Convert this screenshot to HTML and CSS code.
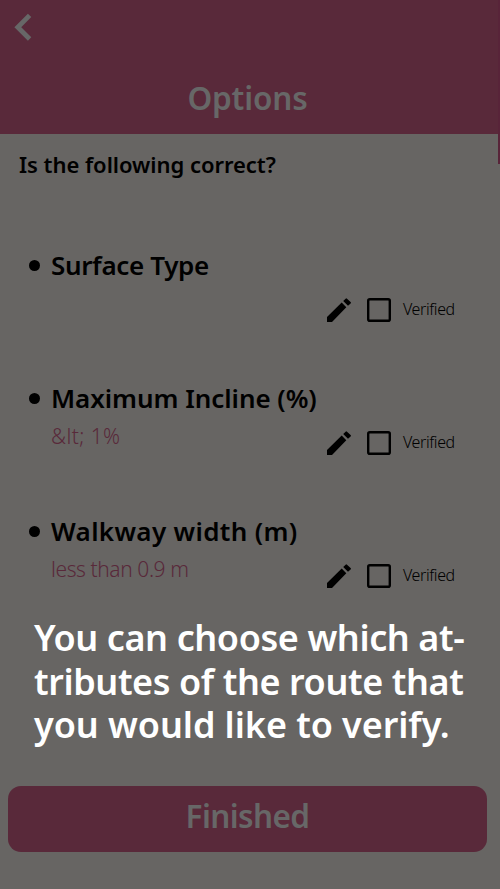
FILE: index.html
```html
<!DOCTYPE html>
<html lang="en"><head><meta charset="utf-8"><title>Options</title><link rel="stylesheet" href="styles.css"></head>
<body>
<main class="screen">
  <header class="header">
    <svg class="back" viewBox="0 0 20 28"><path d="M16.6 2.4 4.8 14.2 16.6 26"/></svg>
    <h1 class="title">Options</h1>
  </header>
  <h2 class="question">Is the following correct?</h2>
  <ul class="list">
    <li class="item">
      <h3 class="name surface">Surface Type</h3>
      <div class="row"><span class="value"></span>
        <svg class="pencil" viewBox="0 0 24 24"><path d="M0 19 14.7 4.6 19.3 9.2 5 24H0zM16.2 3.1 18.6.7Q19.3 0 20 .7L23.6 4.1Q24.3 4.8 23.6 5.5L21 7.8z"/></svg>
        <svg class="box" viewBox="0 0 24 24"><rect x="1.2" y="1.2" width="21.6" height="21.6" rx="1.6"/></svg><span class="verified">Verified</span></div>
    </li>
    <li class="item">
      <h3 class="name incline">Maximum Incline (%)</h3>
      <div class="row"><span class="value percent">&amp;lt; 1%</span>
        <svg class="pencil" viewBox="0 0 24 24"><path d="M0 19 14.7 4.6 19.3 9.2 5 24H0zM16.2 3.1 18.6.7Q19.3 0 20 .7L23.6 4.1Q24.3 4.8 23.6 5.5L21 7.8z"/></svg>
        <svg class="box" viewBox="0 0 24 24"><rect x="1.2" y="1.2" width="21.6" height="21.6" rx="1.6"/></svg><span class="verified">Verified</span></div>
    </li>
    <li class="item">
      <h3 class="name walkway">Walkway width (m)</h3>
      <div class="row"><span class="value metres">less than 0.9 m</span>
        <svg class="pencil" viewBox="0 0 24 24"><path d="M0 19 14.7 4.6 19.3 9.2 5 24H0zM16.2 3.1 18.6.7Q19.3 0 20 .7L23.6 4.1Q24.3 4.8 23.6 5.5L21 7.8z"/></svg>
        <svg class="box" viewBox="0 0 24 24"><rect x="1.2" y="1.2" width="21.6" height="21.6" rx="1.6"/></svg><span class="verified">Verified</span></div>
    </li>
  </ul>
  <button class="finished">Finished</button>
  <div class="scrollbar"></div>
  <p class="hint"><span class="line">You can choose which at-</span><span class="line">tributes of the route that</span><span class="line last">you would like to verify.</span></p>
</main>
</body></html>
```
FILE: styles.css
```css
* { box-sizing: border-box; margin: 0; padding: 0; }
body { background: #676563; font-family: "Noto Sans", "Open Sans", sans-serif; }
.screen { position: relative; display: flex; flex-direction: column; width: 500px; height: 889px; overflow: hidden; color: #000; }
.header { height: 134px; background: #59293a; color: #676767; padding: 13px 0 0 13px; }
.back { display: block; width: 20px; height: 28px; fill: none; stroke: currentColor; stroke-width: 4.8; }
.title { margin: 35px 0 0 -18px; text-align: center; font-size: 31.5px; line-height: 44px; font-weight: 600; letter-spacing: -0.15px; }
.question { margin: 15px 0 0 19px; font-size: 22px; line-height: 30px; font-weight: 600; letter-spacing: -0.04px; white-space: nowrap; }
.list { list-style: none; margin-top: 66px; padding-left: 51px; }
.item { height: 133.2px; }
.name { display: flex; align-items: center; height: 40px; margin-left: -22px; font-size: 26px; font-weight: 600; white-space: nowrap; }
.name::before { content: ""; width: 11px; height: 11px; border-radius: 50%; background: #000; margin-right: 11px; }
.surface { letter-spacing: -0.35px; }
.incline { letter-spacing: -0.05px; }
.walkway { letter-spacing: 0.33px; }
.row { display: flex; height: 50px; padding-top: 13px; }
.value { width: 276px; margin-top: -10px; font-size: 21px; line-height: 30px; font-weight: 300; color: #59293a; white-space: nowrap; }
.percent { letter-spacing: 0.4px; }
.metres { letter-spacing: -0.42px; }
.pencil { width: 24px; height: 24px; margin-right: 16px; fill: #000; }
.box { width: 24px; height: 24px; fill: none; stroke: #000; stroke-width: 2.4; }
.verified { margin-left: 12px; font-size: 16px; line-height: 22px; font-weight: 300; letter-spacing: -0.4px; }
.finished { margin: 141.4px 13px 0 8px; padding-bottom: 7px; height: 66.5px; flex: none; border: 0; border-radius: 13px; background: #59293a; color: #676767; font: 600 31.5px/44px "Noto Sans", sans-serif; letter-spacing: -0.6px; }
.scrollbar { position: absolute; right: 0; top: 0; width: 2.5px; height: 164px; background: #582439; }
.hint { position: absolute; left: 34px; top: 616px; color: #fff; font-size: 36px; line-height: 43.5px; font-weight: 600; white-space: nowrap; }
.line { display: block; letter-spacing: -0.41px; }
.last { letter-spacing: -0.08px; }
```
